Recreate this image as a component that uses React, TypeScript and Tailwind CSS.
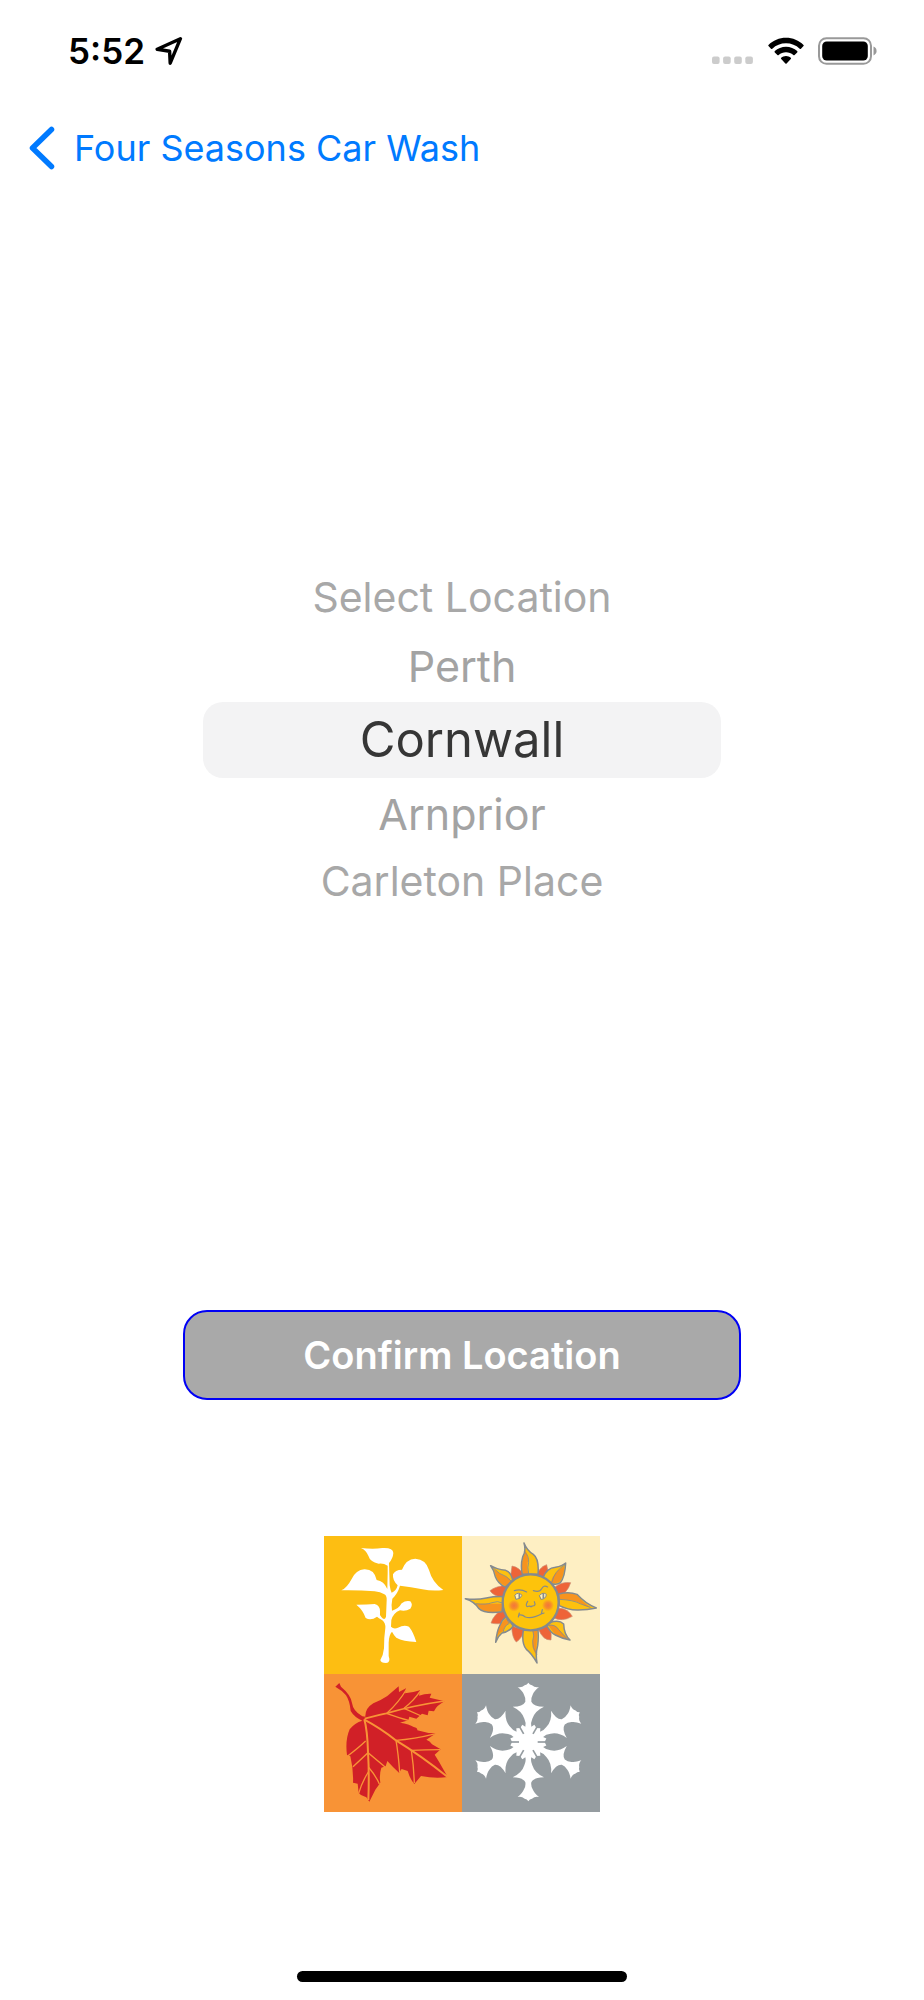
import { useState } from "react";

const LOCATIONS = ["Select Location", "Perth", "Cornwall", "Arnprior", "Carleton Place"];

const ROW_STYLES = [
  "h-[76px] rounded-[20px] bg-[#f3f3f4] text-[49px] text-[#363636]",
  "h-[72px] text-[43px] text-[#a3a3a3]",
  "h-[64px] text-[41px] text-[#a8a8a8]",
];

function StatusBar() {
  return (
    <header className="flex h-[102px] items-center justify-between pl-[68px] pr-[46px] text-black">
      <div className="flex items-center gap-[10px]">
        <time className="text-[35px] font-semibold leading-10">5:52</time>
        <svg viewBox="0 0 28 30" className="h-[30px] w-7" fill="none" stroke="currentColor" strokeWidth="3.4" strokeLinejoin="round" aria-hidden="true">
          <path d="M25.4 2.7 2.2 13.2 14.6 15.2 15.2 27.2Z" />
        </svg>
      </div>
      <div className="flex items-center gap-[14px]">
        <svg viewBox="0 0 42 28" className="h-7 w-[42px]" fill="#cccccc" aria-hidden="true">
          <rect x="0" y="19.500" width="7.6" height="7.6" rx="2" />
          <rect x="11.1" y="19.500" width="7.6" height="7.6" rx="2" />
          <rect x="22.2" y="19.500" width="7.6" height="7.6" rx="2" />
          <rect x="33.3" y="19.500" width="7.6" height="7.6" rx="2" />
        </svg>
        <svg viewBox="0 0 36 28" className="h-7 w-9" fill="currentColor" aria-hidden="true">
          <path d="M18 .8C24.800 .8 31 3.500 35.500 7.900 35.900 8.300 35.900 8.700 35.500 9.100L33 11.700C32.600 12.100 32.100 12.100 31.700 11.700 28 8.200 23.200 6.300 18 6.300S8 8.200 4.300 11.700C3.900 12.100 3.400 12.100 3 11.700L.5 9.100C.1 8.700 .1 8.300 .5 7.900 5 3.500 11.200 .8 18 .8Z" />
          <path d="M18 9.800C22.300 9.800 26.200 11.400 29.200 14.100 29.600 14.500 29.600 15 29.200 15.400L26.600 18C26.200 18.400 25.700 18.400 25.300 18 23.300 16.300 20.800 15.300 18 15.300S12.700 16.300 10.700 18C10.300 18.400 9.800 18.400 9.400 18L6.800 15.400C6.400 15 6.400 14.500 6.800 14.100 9.800 11.400 13.700 9.800 18 9.800Z" />
          <path d="M18 19C19.900 19 21.500 19.700 22.800 20.800 23.200 21.200 23.200 21.700 22.800 22.100L18.600 26.500C18.200 26.900 17.800 26.900 17.400 26.500L13.200 22.100C12.800 21.700 12.800 21.200 13.200 20.800 14.500 19.700 16.100 19 18 19Z" />
        </svg>
        <svg viewBox="0 0 60 28" className="h-7 w-[60px]" aria-hidden="true">
          <rect x="1" y="1.200" width="52" height="25.600" rx="7.500" fill="none" stroke="#999" strokeWidth="2" />
          <rect x="4.200" y="4.500" width="45.600" height="19" rx="4.500" fill="#000" />
          <path d="M55.500 9.600Q58.600 11 58.600 14T55.500 18.400Z" fill="#999" />
        </svg>
      </div>
    </header>
  );
}

function Sprout() {
  return (
    <g transform="translate(-12 -17)" fill="#fff">
      <path d="M123 53Q160 57 187 53Q219 51 220 68Q219 84 207 98L209 165Q211 180 215 187Q229 182 233 165Q217 150 219 132Q225 118 246 118Q258 86 286 85Q318 87 327 119Q337 157 370 179Q338 183 307 177Q272 169 240 166Q233 190 217 205Q213 224 216 241Q235 237 245 219Q258 209 271 213Q280 223 271 235Q257 244 240 240Q220 248 214 269L213 289Q222 298 234 292Q252 282 267 289Q280 305 289 335Q249 333 229 322Q220 312 216 304Q207 313 206 337L206 377Q213 397 198 398Q182 398 181 389Q190 375 192 354Q192 320 196 293Q197 278 187 270Q175 263 171 259Q153 272 137 263Q129 239 109 223Q142 223 164 221Q181 226 180 244Q178 253 184 260Q194 272 198 259L200 210Q201 196 193 192Q181 184 164 183Q116 179 64 180Q80 174 95 146Q108 119 133 117Q163 116 170 149Q192 152 202 176L203 128L203 106Q190 98 176 100Q150 94 145 76Q138 60 123 53Z" />
    </g>
  );
}

const FLAMES =
  "M193 132Q187 106 194 80Q205 62 198 38Q207 61 226 72Q244 86 240 132Z M142 170Q120 160 112 139Q109 120 98 106Q115 117 143 120Q160 126 164 150Z M255 142Q267 113 292 111Q313 107 323 98Q321 139 307 157Q297 164 282 160Z M302 191Q333 183 357 192Q383 221 415 233Q388 239 361 239Q332 240 304 226Z M276 277Q303 267 317 281Q318 313 336 329Q311 324 292 314Q278 308 266 286Z M196 300 240 299Q242 324 239 346Q232 371 237 398Q222 370 205 357Q190 339 196 300Z M145 258 166 287Q154 304 132 308Q119 318 113 336Q116 303 126 284Q133 267 145 258Z M137 199Q109 198 85 203Q56 209 22 205Q49 213 62 234Q82 252 132 244Z";

function Sun() {
  return (
    <g transform="translate(402 -17)" stroke="#858a8e" strokeWidth="4" strokeLinejoin="round" strokeLinecap="round">
      <g fill="#ee6438" stroke="#c98d72" strokeWidth="2">
        <path d="M155 158 162 107Q186 111 200 137Z" />
        <path d="M234 136Q245 110 266 103Q274 129 268 155Z" />
        <path d="M288 172Q311 153 338 157Q328 189 299 201Z" />
        <path d="M300 234Q327 232 343 258Q313 276 286 262Z" />
        <path d="M242 298 272 284Q282 300 279 329Q255 330 242 298Z" />
        <path d="M161 287 199 299Q192 324 175 335Q162 323 161 287Z" />
        <path d="M135 236 155 275Q121 284 99 278Q108 251 135 236Z" />
        <path d="M148 166 134 202Q105 196 96 181Q117 165 148 166Z" />
      </g>
      <path d={FLAMES} fill="#fdc10f" stroke="none" />
      <g fill="#f7931e" stroke="none">
        <path d="M195 131Q188 106 196 80Q203 67 201 58Q211 74 211 90Q205 105 211 131Z" />
        <path d="M143 168Q121 157 115 139Q111 126 107 116Q129 133 139 137Q155 141 158 152Z" />
        <path d="M277 158Q285 127 319 107Q318 139 305 154Q292 161 277 158Z" />
        <path d="M304 191Q333 184 356 193Q377 219 400 232Q380 228 365 218Q346 209 304 207Z" />
        <path d="M270 284Q290 280 301 295Q313 311 331 326Q303 321 290 311Z" />
        <path d="M223 301Q229 315 224 331Q219 349 234 373L238 300Z" />
        <path d="M54 220Q88 220 133 220L133 243Q83 251 64 232Z" />
        <path d="M146 262 154 277Q137 288 136 302Q122 307 116 323Q118 289 130 279Z" />
      </g>
      <g fill="none">
        <path strokeWidth="2.5" d="M201 66Q213 76 212 96Q207 109 212 131M106 113Q123 132 145 139L161 154M320 104Q289 122 282 155M304 207Q347 209 366 220L396 231M54 220Q85 224 102 217T134 218M146 266 154 279Q138 286 135 307M272 285Q292 281 302 298L324 322M225 302Q230 317 224 332Q222 351 236 372" />
        <path d={FLAMES} strokeWidth="4.5" />
      </g>
      <circle cx="218" cy="216" r="84" fill="#fdc30b" strokeWidth="7" />
      <circle cx="168" cy="226" r="18" fill="url(#cheek)" stroke="none" />
      <circle cx="270" cy="225" r="18" fill="url(#cheek)" stroke="none" />
      <g fill="none" strokeWidth="3.5">
        <path d="M169 181Q188 175 206 185M226 181Q245 187 251 175T269 170" />
        <path d="M209 213Q202 225 207 229L215 227Q219 231 223 227Q235 227 229 214" />
        <path d="M184 248 181 260M182 255Q191 251 202 260Q223 266 250 251L253 238M249 251 258 248" />
      </g>
      <path d="M171 194Q181 183 192 195Q187 207 175 207Z M245 195Q255 184 265 192Q264 206 250 207Z" fill="#fff2bd" strokeWidth="3" />
      <path d="M184 192V203M256 191V203" strokeWidth="5" />
    </g>
  );
}

function MapleLeaf() {
  return (
    <g transform="translate(-12 402)">
      <path fill="#d12027" d="M46 50 58 39 63 50Q93 75 96 99Q99 123 127 139L136 140Q135 115 160 100Q184 90 202 78L236 49 237 66 258 55 255 70Q275 69 300 61L297 77Q315 70 334 71L329 83 374 94Q350 106 342 124L326 122 323 136 306 131 289 146 268 140 265 151 240 158Q268 162 281 171Q293 173 292 181Q319 190 348 190L319 209Q330 212 336 223L362 238 344 254 357 275 383 321Q344 326 303 318L283 342Q271 329 263 303L245 297 237 308Q218 291 202 273L197 289 184 293Q177 315 181 338L166 359 148 395 139 382 123 375 116 369 113 341 99 338Q101 300 91 259L81 255Q75 210 89 178Q104 158 127 152Q103 142 92 123Q89 92 78 76Q65 60 46 50Z" />
      <g fill="none" stroke="#f89336" strokeWidth="5">
        <path d="M134 146Q155 140 199 130Q282 106 374 93" />
        <path d="M133 149Q182 175 229 212Q300 255 383 321" strokeWidth="6" />
        <path d="M133 148Q142 180 144 246Q148 310 145 390" strokeWidth="6" />
        <path strokeWidth="4" d="M202 128Q236 98 260 57M252 115Q283 90 300 64M199 130Q240 144 268 152M252 115 304 138M228 211Q280 208 348 191M274 241Q315 239 361 239M228 211Q235 251 239 306M274 241Q281 286 283 339M83 258Q116 233 137 213M99 290 144 248 199 294M145 291Q167 316 178 342M145 306Q126 336 116 370" />
      </g>
    </g>
  );
}

const ARM_ANGLES = [0, 60, 120, 180, 240, 300];

function Snowflake() {
  return (
    <g transform="translate(613 618)" fill="#fff">
      <circle r="38" />
      {ARM_ANGLES.map((angle) => (
        <path
          key={angle}
          transform={`rotate(${angle})`}
          d="M0-178Q4-171 11-170Q20-162 32-165Q17-153 13-142Q7-131 9-121Q16-106 47-106Q19-93 12-70Q6-57 9-46L18-52 25-41 15 0H-15L-25-41-18-52-9-46Q-6-57-12-70Q-19-93-47-106Q-16-106-9-121Q-7-131-13-142Q-17-153-32-165Q-20-162-11-170Q-4-171 0-178Z"
        />
      ))}
      {ARM_ANGLES.map((angle) => (
        <path key={angle} transform={`rotate(${angle + 30})`} d="M0-28V-54" stroke="#959ca0" strokeWidth="5" />
      ))}
    </g>
  );
}

function SeasonsLogo() {
  return (
    <svg viewBox="0 0 828 828" className="size-[276px]" role="img" aria-label="Four Seasons Car Wash">
      <defs>
        <radialGradient id="cheek">
          <stop offset="0" stopColor="#f3753c" />
          <stop offset=".5" stopColor="#f68c2b" />
          <stop offset="1" stopColor="#fdc30b" />
        </radialGradient>
      </defs>
      <rect width="414" height="414" fill="#fdbe12" />
      <rect x="414" width="414" height="414" fill="#feefc3" />
      <rect y="414" width="414" height="414" fill="#f89336" />
      <rect x="414" y="414" width="414" height="414" fill="#959ca0" />
      <Sprout />
      <Sun />
      <MapleLeaf />
      <Snowflake />
    </svg>
  );
}

export default function App() {
  const [selected, setSelected] = useState(2);

  return (
    <div className="flex min-h-screen flex-col bg-white font-['Inter','Liberation_Sans',sans-serif]">
      <StatusBar />
      <nav className="flex h-[92px] items-center px-7">
        <a href="#home" className="flex items-center gap-[18px] text-[36px] leading-[48px] text-[#007aff]">
          <svg viewBox="0 0 28 44" className="h-11 w-7" fill="none" stroke="currentColor" strokeWidth="5.500" strokeLinecap="round" strokeLinejoin="round" aria-hidden="true">
            <path d="M23.500 3.500 4.500 22 23.500 40.500" />
          </svg>
          Four Seasons Car Wash
        </a>
      </nav>
      <main className="flex flex-col items-center px-8 pt-[372px]">
        <div role="listbox" aria-label="Location" className="flex w-full max-w-[518px] flex-col">
          {LOCATIONS.map((name, index) => (
            <button
              key={name}
              type="button"
              role="option"
              aria-selected={index === selected}
              onClick={() => setSelected(index)}
              className={`flex w-full items-center justify-center whitespace-nowrap ${ROW_STYLES[Math.min(Math.abs(index - selected), 2)]}`}
            >
              {name}
            </button>
          ))}
        </div>
        <button
          type="button"
          className="mt-[396px] h-[90px] w-full max-w-[558px] rounded-[24px] border-2 border-[#0000f5] bg-[#a9a9a9] text-[38px] font-semibold text-white"
        >
          Confirm Location
        </button>
        <div className="mt-[136px]">
          <SeasonsLogo />
        </div>
      </main>
      <footer className="mt-auto flex justify-center pb-[18px] pt-10">
        <div className="h-[11px] w-[330px] rounded-full bg-black" />
      </footer>
    </div>
  );
}
